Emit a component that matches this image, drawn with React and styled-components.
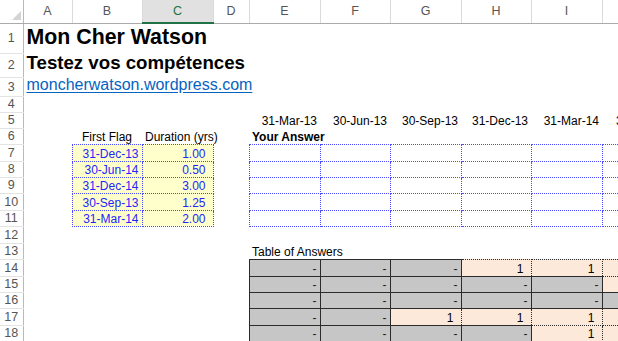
import React from 'react'
import styled, { createGlobalStyle, css } from 'styled-components'

const GlobalStyle = createGlobalStyle`
  html, body {
    margin: 0;
    padding: 0;
    background: #fff;
    overflow: hidden;
  }
  body {
    font-family: "Liberation Sans", Arial, sans-serif;
  }
`

const Viewport = styled.div`
  width: 618px;
  height: 341px;
  overflow: hidden;
  background: #fff;
`

const Sheet = styled.table`
  border-collapse: collapse;
  table-layout: fixed;
  width: ${p => p.$width}px;
  font-family: "Liberation Sans", Arial, sans-serif;
  font-size: 12px;
  color: #000;
`

const Row = styled.tr`
  height: ${p => p.$h}px;
`

const Corner = styled.th`
  padding: 0 1px 2px 0;
  text-align: right;
  vertical-align: bottom;
  border-right: 1px solid #b9b9b9;
  border-bottom: 1px solid #ababab;
  background: #fff;
  line-height: 0;
`

const ColHead = styled.th`
  padding: 0;
  font-weight: 400;
  font-size: 12.5px;
  line-height: 14px;
  color: ${p => (p.$active ? '#217346' : '#555')};
  background: ${p => (p.$active ? '#e1e1e1' : '#fff')};
  border-left: 1px solid #dadada;
  border-right: 1px solid #dadada;
  border-bottom: ${p => (p.$active ? '2px solid #217346' : '1px solid #ababab')};
  text-align: center;
  vertical-align: middle;
`

const RowHead = styled.th`
  padding: 0;
  font-weight: 400;
  font-size: 12.5px;
  line-height: 14px;
  color: #555;
  background: #fff;
  border-right: 1px solid #b9b9b9;
  border-bottom: 1px solid #e3e3e3;
  text-align: center;
  vertical-align: middle;
`

const kinds = {
  title: css`
    font-size: 21.33px;
    font-weight: 700;
    line-height: 24px;
    padding-bottom: 4px;
  `,
  subtitle: css`
    font-size: 18.67px;
    font-weight: 700;
    line-height: 20px;
    padding-bottom: 4px;
  `,
  link: css`
    font-size: 16px;
    line-height: 14px;
    padding-bottom: 4px;
  `,
  input: css`
    background: #ffffcc;
    color: #2424ff;
    border: 1px dotted #4b4bff;
  `,
  answer: css`
    border: 1px dotted #4b4bff;
  `,
  dash: css`
    background: #c6c6c6;
    color: #222;
    border: 1px solid #2b2b2b;
  `,
  hit: css`
    background: #fde9d9;
    border: 1px dotted #2b2b2b;
  `,
}

const Cell = styled.td`
  padding: 0 ${p => p.$pad ?? 3}px 0 3px;
  white-space: nowrap;
  overflow: visible;
  text-align: ${p => p.$align || 'left'};
  vertical-align: bottom;
  line-height: 14px;
  font-weight: ${p => (p.$bold ? 700 : 400)};
  ${p => kinds[p.$kind] || ''}
`

const Link = styled.a`
  color: #0563c1;
  text-decoration: underline;
  text-underline-offset: 2px;
`

const COLS = ['A', 'B', 'C', 'D', 'E', 'F', 'G', 'H', 'I', 'J']
const WIDTHS = [49, 70, 71, 36, 71, 70, 71, 70, 71, 71]
const HEIGHTS = [30, 24, 19, 16, 16, 16, 17, 16, 16, 17, 16, 17, 16, 17, 16, 16, 17, 16]

const blank = n => Array.from({ length: n }, () => ({}))

const inputs = [
  ['31-Dec-13', '1.00'],
  ['30-Jun-14', '0.50'],
  ['31-Dec-14', '3.00'],
  ['30-Sep-13', '1.25'],
  ['31-Mar-14', '2.00'],
]

const hits = [
  [0, 0, 0, 1, 1, 1],
  [0, 0, 0, 0, 0, 1],
  [0, 0, 0, 0, 0, 0],
  [0, 0, 1, 1, 1, 1],
  [0, 0, 0, 0, 1, 1],
]

const dates = ['31-Mar-13', '30-Jun-13', '30-Sep-13', '31-Dec-13', '31-Mar-14', '30-Jun-14']

const rows = [
  [{ span: 10, kind: 'title', text: 'Mon Cher Watson' }],
  [{ span: 10, kind: 'subtitle', text: 'Testez vos compétences' }],
  [{ span: 10, kind: 'link', link: 'moncherwatson.wordpress.com' }],
  blank(10),
  [...blank(4), ...dates.map(d => ({ text: d, align: 'right' }))],
  [
    {},
    { text: 'First Flag', align: 'center' },
    { text: 'Duration (yrs)', align: 'center', pad: 0 },
    {},
    { text: 'Your Answer', bold: true },
    ...blank(5),
  ],
  ...inputs.map(([d, v]) => [
    {},
    { text: d, kind: 'input', align: 'right' },
    { text: v, kind: 'input', align: 'right', pad: 7 },
    {},
    ...Array.from({ length: 6 }, () => ({ kind: 'answer' })),
  ]),
  blank(10),
  [...blank(4), { text: 'Table of Answers' }, ...blank(5)],
  ...hits.map(r => [
    ...blank(4),
    ...r.map(h =>
      h
        ? { text: '1', kind: 'hit', align: 'right', pad: 7 }
        : { text: '-', kind: 'dash', align: 'right' }
    ),
  ]),
]

const CornerMark = () => (
  <svg width="10" height="10" viewBox="0 0 10 10">
    <polygon points="9,0 9,9 0,9" fill="#d4d4d4" />
  </svg>
)

const App = () => {
  const total = 23 + WIDTHS.reduce((a, b) => a + b, 0)
  return (
    <Viewport>
      <GlobalStyle />
      <Sheet $width={total}>
        <colgroup>
          <col style={{ width: 23 }} />
          {WIDTHS.map((w, i) => (
            <col key={i} style={{ width: w }} />
          ))}
        </colgroup>
        <thead>
          <Row $h={23}>
            <Corner>
              <CornerMark />
            </Corner>
            {COLS.map(c => (
              <ColHead key={c} $active={c === 'C'}>
                {c}
              </ColHead>
            ))}
          </Row>
        </thead>
        <tbody>
          {rows.map((cells, r) => (
            <Row key={r} $h={HEIGHTS[r]}>
              <RowHead>{r + 1}</RowHead>
              {cells.map((c, i) => (
                <Cell
                  key={i}
                  colSpan={c.span}
                  $kind={c.kind}
                  $align={c.align}
                  $pad={c.pad}
                  $bold={c.bold}
                >
                  {c.link ? <Link>{c.link}</Link> : c.text}
                </Cell>
              ))}
            </Row>
          ))}
        </tbody>
      </Sheet>
    </Viewport>
  )
}

export default App
